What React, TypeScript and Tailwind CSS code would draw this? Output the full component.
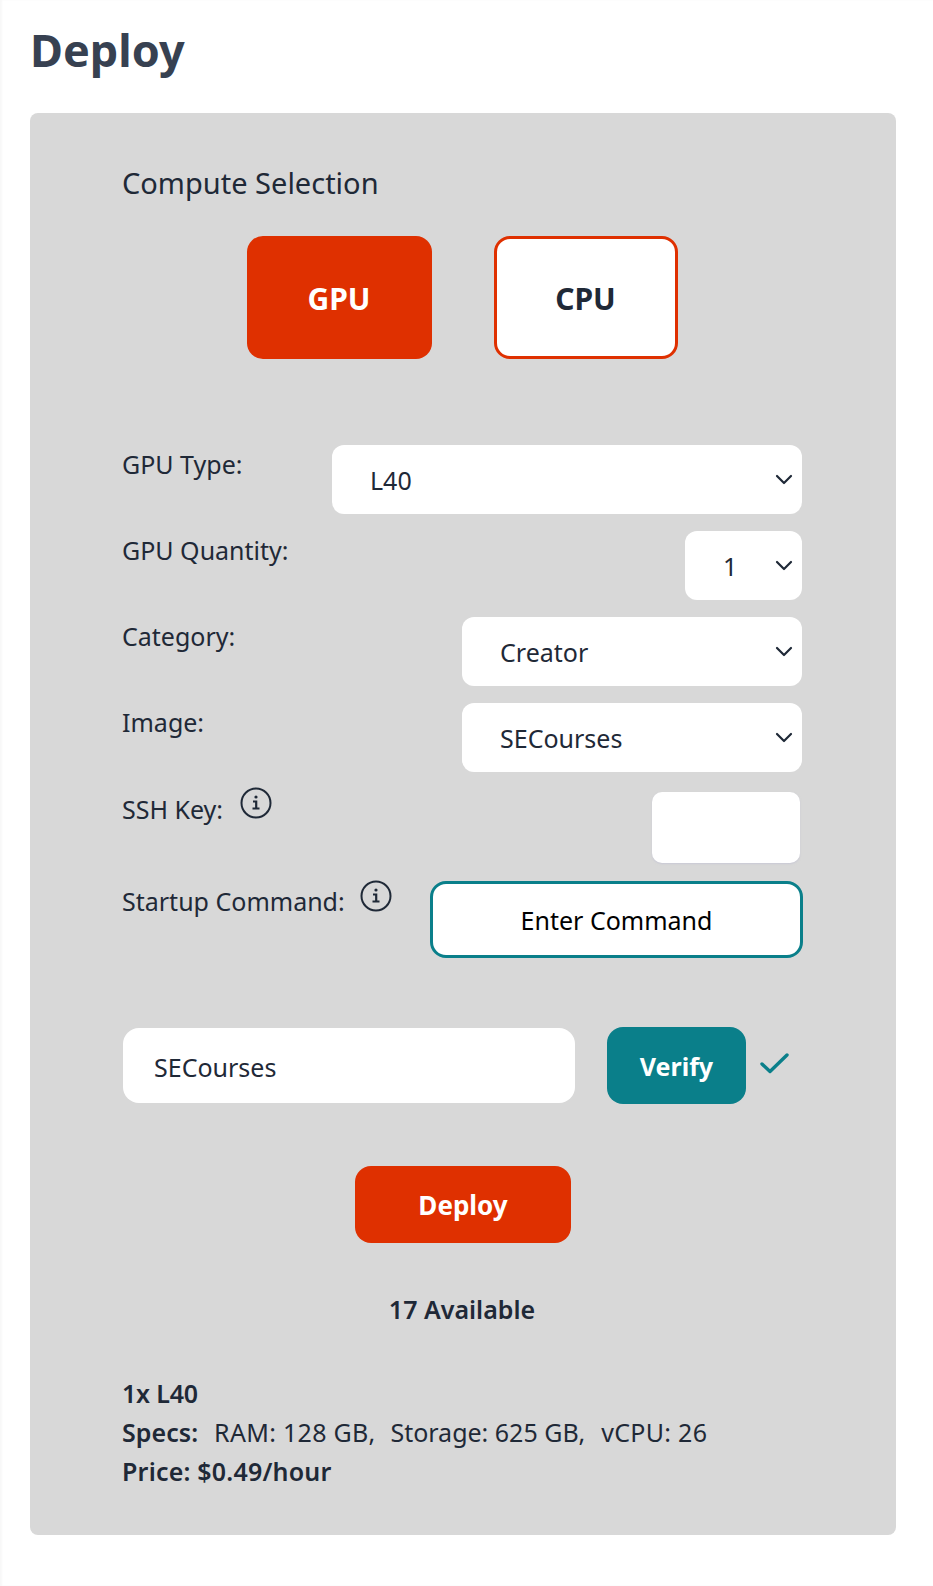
import React from "react";

const Chevron = () => (
  <svg className="pointer-events-none absolute right-[9px] top-[28px] h-[12px] w-[18px]" viewBox="0 0 18 12" fill="none" stroke="#1f2937" strokeWidth="2.2" strokeLinecap="round" strokeLinejoin="round">
    <path d="M2 3l7 7 7-7" />
  </svg>
);

const Info = ({ className }: { className: string }) => (
  <svg className={`h-[32px] w-[32px] shrink-0 ${className}`} viewBox="0 0 32 32" fill="none" stroke="#1f2937" strokeWidth="2">
    <circle cx="16" cy="16" r="14.5" />
    <path d="M13 14.5h3.2v7M12.5 21.5h7" strokeWidth="2.2" />
    <circle cx="16" cy="10" r="1.6" fill="#1f2937" stroke="none" />
  </svg>
);

function Row({ label, value, width }: { label: string; value: string; width: string }) {
  return (
    <div className="flex h-[69px] items-start justify-between">
      <span className="mt-[1px] leading-[36px]">{label}</span>
      <div className={`relative h-[69px] ${width}`}>
        <select
          defaultValue={value}
          className="h-full w-full appearance-none rounded-[12px] bg-white pl-[38px] pt-[2px] text-[25px] text-[#1f2937] outline-none"
        >
          <option>{value}</option>
        </select>
        <Chevron />
      </div>
    </div>
  );
}

export default function App() {
  return (
    <div className="min-h-[1586px] bg-white pl-[30px] pr-[37px] pt-[20px] text-[25px] text-[#1f2937] shadow-[inset_2px_0_2px_rgba(0,0,0,0.03)] [font-family:'Noto_Sans','Open_Sans',sans-serif]">
      <h1 className="mb-[33px] h-[60px] text-[45px] font-bold leading-[60px] text-[#374151]">Deploy</h1>
      <div className="h-[1422px] rounded-[8px] bg-[#d8d8d8] pl-[92px] pr-[94px] pt-[48px]">
        <h2 className="text-[29px] leading-[44px]">Compute Selection</h2>
        <div className="mt-[31px] flex justify-center gap-[62px]">
          <button className="h-[123px] w-[185px] rounded-[16px] bg-[#df3000] pt-[2px] text-[30px] font-bold text-white">GPU</button>
          <button className="h-[123px] w-[184px] rounded-[16px] border-[3px] border-[#df3000] bg-white pt-[2px] text-[30px] font-bold text-[#1f2937]">CPU</button>
        </div>
        <div className="mt-[86px] flex flex-col gap-[17px]">
          <Row label="GPU Type:" value="L40" width="w-[470px]" />
          <Row label="GPU Quantity:" value="1" width="w-[117px]" />
          <Row label="Category:" value="Creator" width="w-[340px]" />
          <Row label="Image:" value="SECourses" width="w-[340px]" />
        </div>
        <div className="mt-[20px] flex h-[71px] items-start justify-between pr-[2px]">
          <div className="flex items-start gap-[17px]">
            <span className="-mt-[1px] leading-[36px]">SSH Key:</span>
            <Info className="-mt-[5px]" />
          </div>
          <input className="h-[71px] w-[148px] rounded-[10px] bg-white shadow-[0_1px_2px_rgba(190,190,210,0.6)] outline-none" />
        </div>
        <div className="mt-[18px] flex h-[77px] items-start">
          <div className="flex items-start gap-[15px]">
            <span className="mt-[2px] leading-[36px]">Startup Command:</span>
            <Info className="-mt-[1px]" />
          </div>
          <button className="-mr-[1px] ml-auto h-[77px] w-[373px] rounded-[16px] border-[3px] border-[#0a7f8a] bg-white pt-[3px] text-[25px] text-black">Enter Command</button>
        </div>
        <div className="mt-[69px] flex h-[77px] items-center">
          <input
            defaultValue="SECourses"
            className="ml-[1px] h-[75px] w-[452px] rounded-[16px] bg-white pl-[31px] pt-[3px] text-[25px] text-[#1f2937] outline-none"
          />
          <button className="ml-[32px] h-[77px] w-[139px] rounded-[16px] bg-[#0a7f8a] pt-[2px] text-[25px] font-bold text-white">Verify</button>
          <svg className="mb-[5px] ml-[14px] h-[22px] w-[30px]" viewBox="0 0 30 22" fill="none" stroke="#0a7f8a" strokeWidth="3.4" strokeLinecap="round" strokeLinejoin="round">
            <path d="M2 12l8 7.5L27 3" />
          </svg>
        </div>
        <div className="mt-[62px] flex justify-center pl-[2px]">
          <button className="h-[77px] w-[216px] rounded-[16px] bg-[#df3000] pt-[2px] text-[26px] font-bold text-white">Deploy</button>
        </div>
        <p className="mt-[46px] text-center font-semibold leading-[40px]">17 Available</p>
        <div className="mt-[45px] leading-[39px]">
          <p className="font-semibold tracking-[-0.2px]">1x L40</p>
          <p>
            <span className="font-semibold tracking-[0.05px]">Specs:</span>
            <span className="ml-[16px] tracking-[0.3px]">RAM: 128 GB,</span>
            <span className="ml-[15px]">Storage: 625 GB,</span>
            <span className="ml-[16px] tracking-[0.3px]">vCPU: 26</span>
          </p>
          <p className="font-semibold tracking-[0.2px]">Price: $0.49/hour</p>
        </div>
      </div>
    </div>
  );
}
